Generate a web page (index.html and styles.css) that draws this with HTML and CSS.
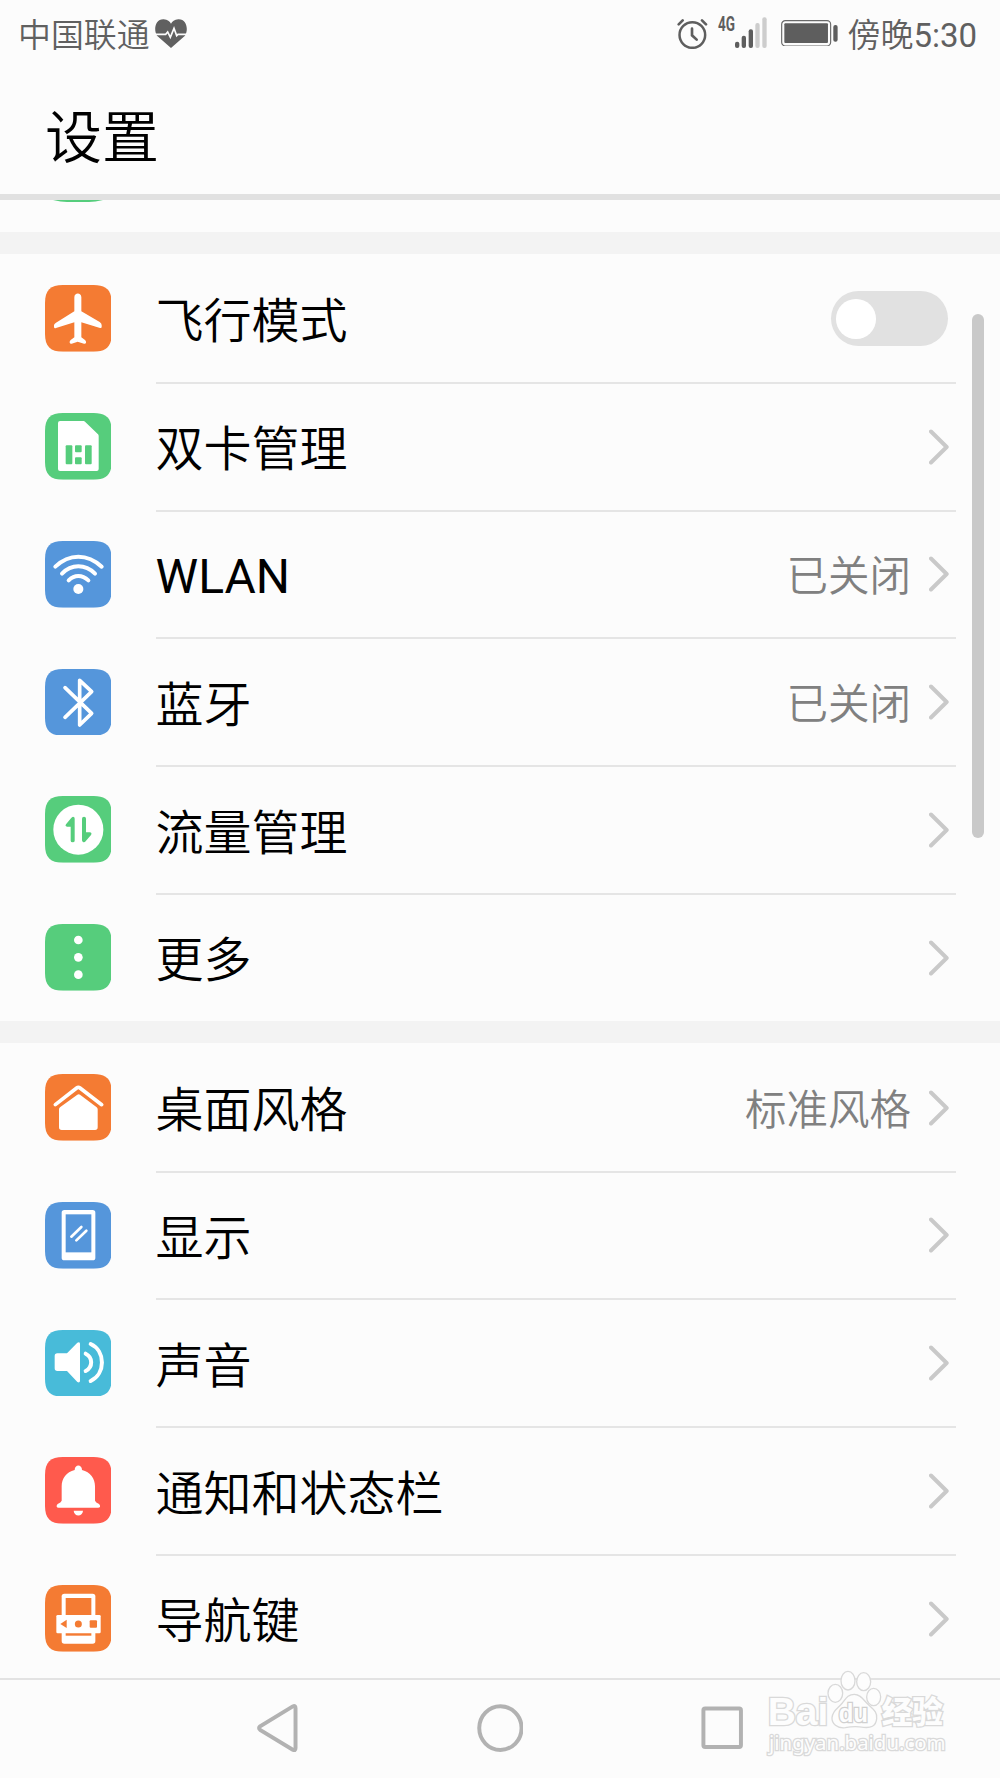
FILE: index.html
```html
<!DOCTYPE html>
<html lang="zh-CN">
<head>
<meta charset="utf-8">
<title>设置</title>
<link rel="stylesheet" href="styles.css">
</head>
<body>
<svg class="defs" width="0" height="0" aria-hidden="true">
  <symbol id="tile" viewBox="0 0 200 200"><path d="M0 54C0 16 16 0 54 0H146C184 0 200 16 200 54V146C200 184 184 200 146 200H54C16 200 0 184 0 146Z"/></symbol>
  <symbol id="chevron" viewBox="0 0 60 108"><path d="M6 7.500L53 54L6 100.500" fill="none" stroke="#c9c9c9" stroke-width="12" stroke-linecap="round" stroke-linejoin="round"/></symbol>
</svg>
<div class="screen">
  <header class="status">
    <span class="carrier">中国联通</span>
    <svg class="heart" viewBox="0 0 96 88"><path d="M48 87L6 50C-5 34 0 0 26 1C38 2 44 8 48 14C52 8 58 2 70 1C96 0 101 34 90 50Z" fill="#606060"/><path d="M0 46H32L38 39L46 55L57 28L65 50L69 46H96" fill="none" stroke="#fcfcfc" stroke-width="5"/></svg>
    <span class="grow"></span>
    <svg class="alarm" viewBox="0 0 92 94" fill="none" stroke="#5e5e5e" stroke-linecap="round"><circle cx="46" cy="51" r="38.500" stroke-width="7.500"/><path d="M45 32V52L59 65" stroke-width="8"/><path d="M5 19L17 7M87 19L75 7" stroke-width="8"/></svg>
    <svg class="signal" viewBox="0 0 150 96"><text class="net" x="0" y="43" textLength="51" lengthAdjust="spacingAndGlyphs">4G</text><g fill="#5e5e5e"><rect x="51" y="74" width="13" height="19" rx="6"/><rect x="71" y="56" width="13" height="37" rx="6"/><rect x="92" y="37" width="13" height="56" rx="6"/></g><g fill="#cdcdcd"><rect x="112" y="18" width="13" height="75" rx="6"/><rect x="133" y="1" width="13" height="92" rx="6"/></g></svg>
    <svg class="battery" viewBox="0 0 172 80"><rect x="2" y="2" width="147" height="76" rx="11" fill="none" stroke="#6a6a6a" stroke-width="3.500"/><rect x="10" y="10" width="131" height="59" rx="3" fill="#5e5e5e"/><rect x="157" y="15" width="13" height="50" rx="6" fill="#5e5e5e"/></svg>
    <span class="clock">傍晚<span class="digits">5:30</span></span>
  </header>
  <h1 class="title">设置</h1>
  <main class="list">
    <div class="tail"><svg class="sliver" viewBox="0 0 50 2"><path d="M0 0H50Q42 2 36 2H14Q8 2 0 0Z" fill="#55cd7c"/></svg></div>
    <section class="group">
      <div class="row">
        <svg class="icon orange" viewBox="0 0 200 200"><use href="#tile"/><path fill="#fff" d="M88 37C88 22 109 22 109 37V79L164 111Q170 115 170 121V126Q170 130 165 129L109 112V157L120 165Q124 168 123 173Q122 177 117 176L98 170L80 176Q75 177 74 173Q73 168 77 165L88 157V112L33 129Q27 131 27 125V121Q27 117 33 113L88 79Z"/></svg>
        <div class="body"><span class="label">飞行模式</span><span class="toggle"><i></i></span></div>
      </div>
      <div class="row">
        <svg class="icon green" viewBox="0 0 200 200"><use href="#tile"/><path fill="#fff" d="M45 24H116Q118 24 120 26L159 64Q161 66 161 69V168Q161 174 155 174H45Q39 174 39 168V30Q39 24 45 24Z"/><g><rect x="62" y="97" width="20" height="57" rx="3"/><rect x="90" y="97" width="20" height="21" rx="3"/><rect x="90" y="133" width="20" height="21" rx="3"/><rect x="120" y="97" width="20" height="57" rx="3"/></g></svg>
        <div class="body"><span class="label">双卡管理</span><svg class="chev"><use href="#chevron"/></svg></div>
      </div>
      <div class="row">
        <svg class="icon blue" viewBox="0 0 200 200"><use href="#tile"/><g fill="none" stroke="#fff" stroke-width="12" stroke-linecap="round"><path d="M31 77Q62 47 100 47Q138 47 170 77"/><path d="M51 98Q72 76 100 76Q128 76 150 98"/><path d="M71 118Q84 105 100 105Q116 105 130 118"/></g><circle cx="100" cy="144" r="15" fill="#fff"/></svg>
        <div class="body"><span class="label latin">WLAN</span><span class="value">已关闭</span><svg class="chev"><use href="#chevron"/></svg></div>
      </div>
      <div class="row">
        <svg class="icon blue" viewBox="0 0 200 200"><use href="#tile"/><path fill="none" stroke="#fff" stroke-width="11" stroke-linecap="round" stroke-linejoin="round" d="M60 56L140 133L104 168V34L140 68L60 145"/></svg>
        <div class="body"><span class="label">蓝牙</span><span class="value">已关闭</span><svg class="chev"><use href="#chevron"/></svg></div>
      </div>
      <div class="row">
        <svg class="icon green" viewBox="0 0 200 200"><use href="#tile"/><circle cx="100" cy="101" r="75" fill="#fff"/><path d="M78 67Q82 61 86 63Q89 64 89 68V134Q89 139 83 139Q77 139 77 134V92H66Q59 91 63 85Z"/><path d="M123 134Q119 140 114 138Q111 137 111 133V68Q111 62 117 62Q123 62 123 68V109H134Q142 110 138 117Z"/></svg>
        <div class="body"><span class="label">流量管理</span><svg class="chev"><use href="#chevron"/></svg></div>
      </div>
      <div class="row">
        <svg class="icon green" viewBox="0 0 200 200"><use href="#tile"/><g fill="#fff"><circle cx="100" cy="48" r="13"/><circle cx="100" cy="100" r="13"/><circle cx="100" cy="152" r="13"/></g></svg>
        <div class="body"><span class="label">更多</span><svg class="chev"><use href="#chevron"/></svg></div>
      </div>
    </section>
    <section class="group">
      <div class="row">
        <svg class="icon orange" viewBox="0 0 200 200"><use href="#tile"/><path d="M31 92L95 42Q100 38 105 42L170 92" fill="none" stroke="#fff" stroke-width="11" stroke-linecap="round"/><path fill="#fff" d="M97 62Q101 59 105 62L154 99Q158 102 158 106V160Q158 168 150 168H50Q42 168 42 160V106Q42 102 46 99Z"/></svg>
        <div class="body"><span class="label">桌面风格</span><span class="value">标准风格</span><svg class="chev"><use href="#chevron"/></svg></div>
      </div>
      <div class="row">
        <svg class="icon blue" viewBox="0 0 200 200"><use href="#tile"/><rect x="50" y="24" width="101" height="151" rx="8" fill="#fff"/><rect x="62" y="37" width="77" height="114"/><path d="M79 104L109 75M94 115L124 86" stroke="#fff" stroke-width="8" stroke-linecap="round"/></svg>
        <div class="body"><span class="label">显示</span><svg class="chev"><use href="#chevron"/></svg></div>
      </div>
      <div class="row">
        <svg class="icon cyan" viewBox="0 0 200 200"><use href="#tile"/><path fill="#fff" d="M37 70H66L97 38Q104 34 105 41V153Q104 160 97 156L66 123H37Q29 123 29 115V78Q29 70 37 70Z"/><g fill="none" stroke="#fff" stroke-width="12" stroke-linecap="round"><path d="M122 71C144 82 144 112 122 123"/><path d="M137 42C182 63 182 131 137 153"/></g></svg>
        <div class="body"><span class="label">声音</span><svg class="chev"><use href="#chevron"/></svg></div>
      </div>
      <div class="row">
        <svg class="icon red" viewBox="0 0 200 200"><use href="#tile"/><path fill="#fff" d="M89 39C89 21 111 21 111 39C136 45 150 64 150 88V131Q152 136 162 141Q166 145 165 149Q164 152 159 152H41Q36 152 35 149Q34 145 38 141Q48 136 50 131V88C50 64 64 45 89 39ZM86 161H114C113 180 87 180 86 161Z"/></svg>
        <div class="body"><span class="label">通知和状态栏</span><svg class="chev"><use href="#chevron"/></svg></div>
      </div>
      <div class="row">
        <svg class="icon orange" viewBox="0 0 200 200"><use href="#tile"/><rect x="50" y="26" width="101" height="150" rx="8" fill="#fff"/><rect x="62" y="39" width="77" height="113"/><rect x="34" y="90" width="133" height="55" rx="4" fill="#fff"/><path d="M65 104V129L46 117Z"/><circle cx="100" cy="117" r="10.500"/><rect x="134" y="106" width="22" height="22" rx="3"/></svg>
        <div class="body"><span class="label">导航键</span><svg class="chev"><use href="#chevron"/></svg></div>
      </div>
    </section>
    <div class="scrollbar"></div>
  </main>
  <nav class="nav">
    <svg class="back" viewBox="0 0 118 140"><path d="M104 7Q112 3 112 12V128Q112 137 104 133L9 75Q3 70 9 65Z"/></svg>
    <svg class="home" viewBox="0 0 136 140"><ellipse cx="68" cy="70" rx="61.500" ry="63.500"/></svg>
    <svg class="recent" viewBox="0 0 124 126"><rect x="7" y="7" width="109" height="112" rx="5"/></svg>
  </nav>
  <svg class="watermark" viewBox="0 0 540 270">
    <g class="wm">
      <text class="wm-bold" x="2" y="166" textLength="182" lengthAdjust="spacingAndGlyphs">Bai</text>
      <ellipse cx="205" cy="70" rx="22" ry="27"/><ellipse cx="243" cy="32" rx="21" ry="28"/><ellipse cx="290" cy="35" rx="21" ry="27"/><ellipse cx="320" cy="81" rx="21" ry="26"/>
      <path d="M262 73C280 73 288 88 303 103C320 119 331 125 329 146C327 170 310 174 290 172C270 169 250 170 235 173C210 176 194 160 195 143C196 122 212 116 226 99C237 85 243 73 262 73Z"/>
      <text class="wm-du" x="215" y="156" textLength="88" lengthAdjust="spacingAndGlyphs">du</text>
      <text class="wm-cjk" x="344" y="160">经验</text>
      <text class="wm-url" x="6" y="240" textLength="530" lengthAdjust="spacingAndGlyphs">jingyan.baidu.com</text>
    </g>
  </svg>
</div>
</body>
</html>
```
FILE: styles.css
```css
* { box-sizing: border-box; }
body {
  margin: 0;
  background: #fcfcfc;
  color: #000;
  font-family: Roboto, "Noto Sans CJK SC", sans-serif;
}
svg { display: block; flex: none; }
.defs { position: absolute; }
.screen {
  position: relative;
  display: flex;
  flex-direction: column;
  width: 1000px;
  height: 1778px;
  overflow: hidden;
}
.status {
  display: flex;
  align-items: flex-start;
  height: 68px;
  padding: 0 22px 0 18px;
  color: #606060;
  font-size: 33px;
  line-height: 71px;
}
.carrier { width: 137px; white-space: nowrap; font-size: 32.900px; font-weight: 350; }
.heart { width: 32px; height: 29.300px; margin-top: 19px; }
.grow { flex: 1; }
.alarm { width: 30.700px; height: 31.300px; margin-top: 17.500px; }
.signal { width: 50px; height: 32px; margin: 17px 0 0 10.500px; overflow: visible; }
.net { font: 700 58px Roboto, sans-serif; fill: #5e5e5e; }
.battery { width: 57.300px; height: 26.700px; margin: 19.500px 0 0 13px; }
.clock { width: 130.500px; margin-left: 9px; white-space: nowrap; font-weight: 350; }
.digits { font-weight: 400; }
.title {
  height: 132px;
  margin: 0;
  padding-left: 45px;
  border-bottom: 6px solid #e1e1e1;
  font-size: 57px;
  line-height: 141px;
  font-weight: 350;
}
.list { position: relative; height: 1478px; overflow: hidden; }
.tail { height: 32px; padding-left: 53px; }
.sliver { width: 50px; height: 2px; }
.group { border-top: 22.700px solid #f3f3f3; }
.row { display: flex; align-items: center; height: 127.800px; padding-left: 44.500px; }
.icon { width: 66.700px; height: 66.700px; margin: 1.500px 44.400px 0 0; fill: currentColor; }
.orange { color: #f47b33; }
.green { color: #56cd7c; }
.blue { color: #5596db; }
.cyan { color: #48bbd9; }
.red { color: #ff5a4d; }
.body {
  display: flex;
  align-items: center;
  width: 800px;
  height: 100%;
  border-top: 2px solid #e5e5e5;
}
.row:first-child .body { border-top-color: transparent; }
.label { flex: 1; padding-top: 7px; font-size: 48px; line-height: 70px; font-weight: 350; }
.latin { padding-top: 6px; font-weight: 400; }
.value { padding-top: 6px; margin-right: 18px; color: #808080; font-size: 41.500px; line-height: 60px; font-weight: 350; }
.chev { width: 20px; height: 36px; margin-right: 6.500px; }
.toggle {
  display: flex;
  align-items: center;
  width: 117px;
  height: 55px;
  margin-right: 8px;
  padding-left: 5.500px;
  border-radius: 28px;
  background: #e1e1e1;
}
.toggle i { width: 39.500px; height: 39.500px; border-radius: 50%; background: #fff; }
.scrollbar {
  position: absolute;
  top: 114px;
  right: 16.500px;
  width: 11.500px;
  height: 524px;
  border-radius: 6px;
  background: #c9c9c9;
}
.nav {
  display: flex;
  align-items: center;
  height: 100px;
  padding: 0 0 2px 257px;
  border-top: 2px solid #e3e3e3;
  fill: none;
  stroke: #b2b2b2;
  stroke-width: 11.500px;
}
.back { width: 40.600px; height: 48.200px; }
.home { width: 46.800px; height: 48.200px; margin-left: 179px; }
.recent { width: 42.700px; height: 43.400px; margin-left: 177.500px; }
.watermark { position: absolute; left: 767px; top: 1670px; width: 180px; height: 90px; overflow: visible; }
.wm { fill: #fdfdfd; stroke: #d9d9d9; stroke-width: 4px; }
.wm text { paint-order: stroke; stroke-width: 8px; }
.wm-bold { font: 700 116px "Liberation Sans", sans-serif; }
.wm .wm-du { font: 700 76px "Liberation Sans", sans-serif; stroke: #d0d0d0; }
.wm-cjk { font: 900 92px "Noto Sans CJK SC", sans-serif; }
.wm-url { font: 400 62px "Noto Sans", sans-serif; }
```
